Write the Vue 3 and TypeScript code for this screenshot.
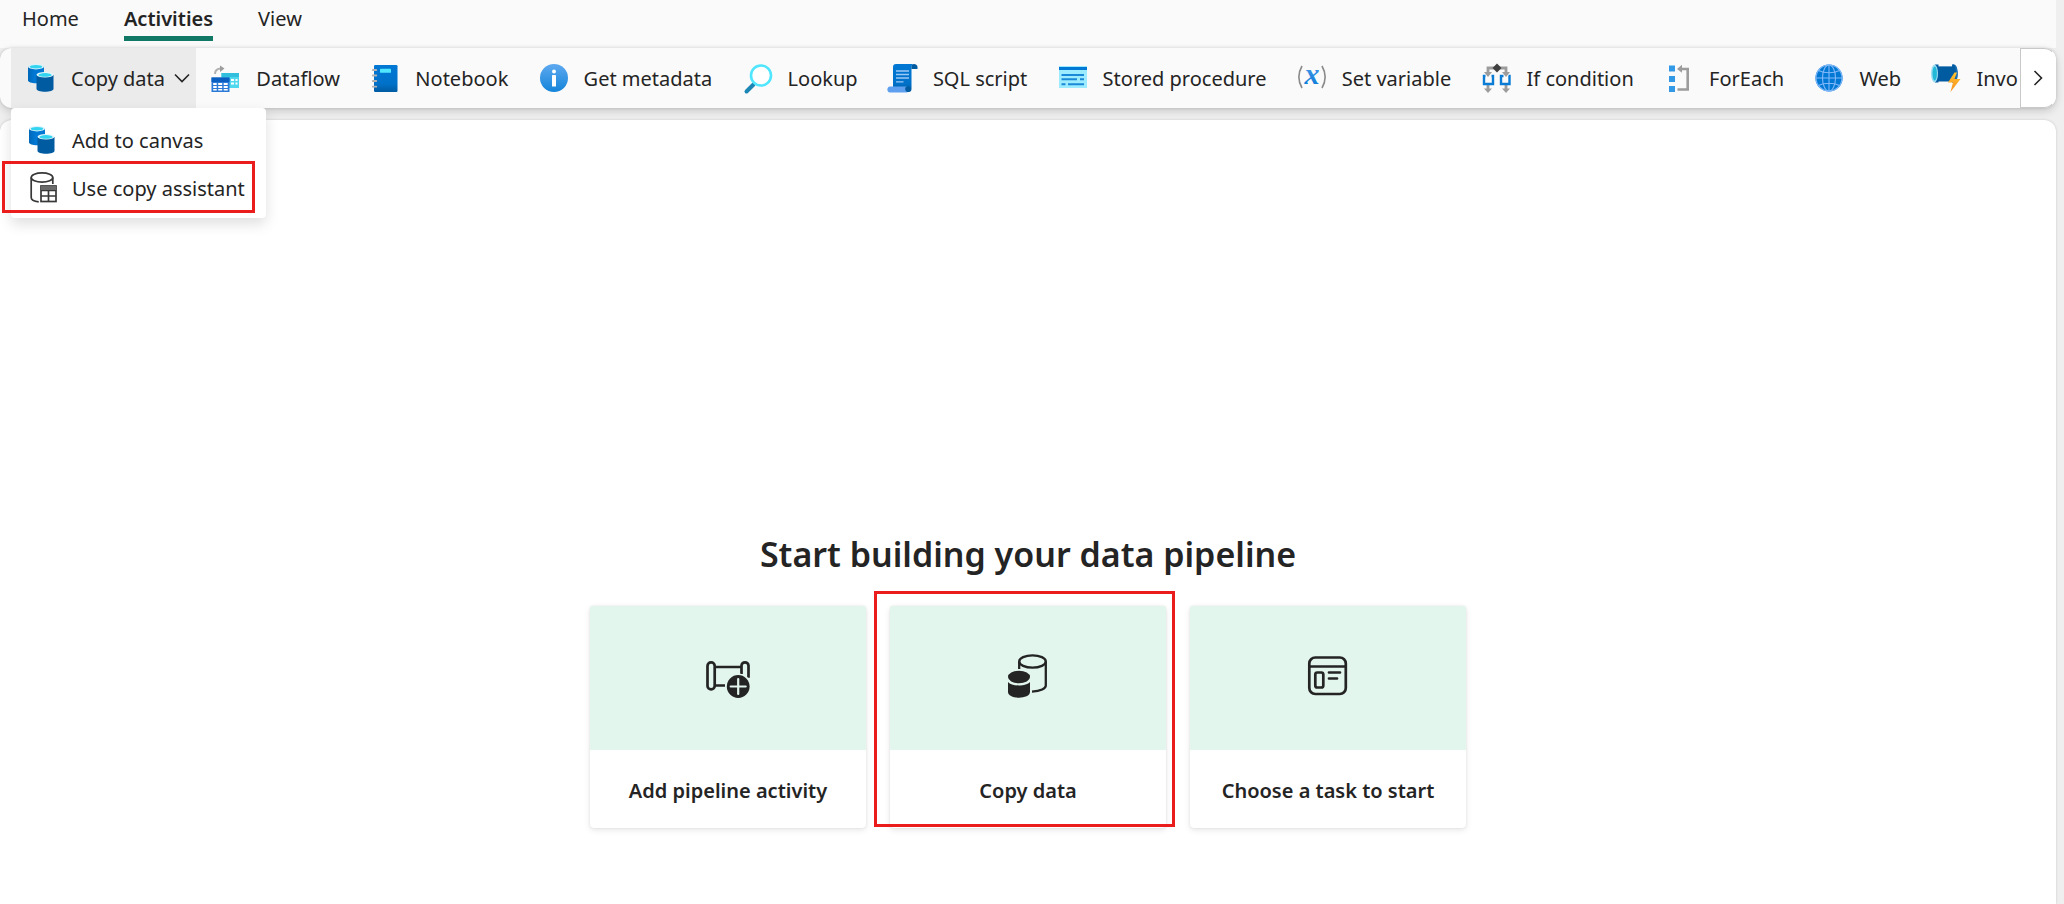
<script setup lang="ts">
import { ref } from 'vue'

interface Activity {
  id: string
  label: string
}

const tabs: string[] = ['Home', 'Activities', 'View']
const activeTab = ref('Activities')

const activities: Activity[] = [
  { id: 'dataflow', label: 'Dataflow' },
  { id: 'notebook', label: 'Notebook' },
  { id: 'metadata', label: 'Get metadata' },
  { id: 'lookup', label: 'Lookup' },
  { id: 'sql', label: 'SQL script' },
  { id: 'procedure', label: 'Stored procedure' },
  { id: 'variable', label: 'Set variable' },
  { id: 'condition', label: 'If condition' },
  { id: 'foreach', label: 'ForEach' },
  { id: 'web', label: 'Web' },
  { id: 'invoke', label: 'Invo' },
]

const cards: Activity[] = [
  { id: 'pipeline', label: 'Add pipeline activity' },
  { id: 'copy', label: 'Copy data' },
  { id: 'task', label: 'Choose a task to start' },
]
</script>

<template>
  <div class="page">
    <svg class="defs" aria-hidden="true">
      <defs>
        <linearGradient id="cylBack" x1="0" x2="1"><stop offset="0" stop-color="#0067b8" /><stop offset=".4" stop-color="#0078d4" /><stop offset="1" stop-color="#0078d4" /></linearGradient>
        <linearGradient id="blueDown" x1="0" y1="0" x2="0" y2="1"><stop offset="0" stop-color="#0078d4" /><stop offset=".7" stop-color="#0071c9" /><stop offset="1" stop-color="#005ba1" /></linearGradient>
        <linearGradient id="infoDown" x1="0" y1="0" x2="0" y2="1"><stop offset="0" stop-color="#5ea9f0" /><stop offset="1" stop-color="#1484d9" /></linearGradient>
        <linearGradient id="xDown" x1="0" y1="0" x2="0" y2="1"><stop offset="0" stop-color="#5ea0ef" /><stop offset="1" stop-color="#0078d4" /></linearGradient>
        <linearGradient id="bolt" x1="0" y1="0" x2="0" y2="1"><stop offset="0" stop-color="#ffc42e" /><stop offset="1" stop-color="#f78d1e" /></linearGradient>
        <symbol id="cylinders" viewBox="0 0 28 28">
          <path d="M1 2.500v14c0 1.600 3.600 2.800 8 2.800s8-1.200 8-2.800v-14z" fill="url(#cylBack)" />
          <ellipse cx="9" cy="2.700" rx="8" ry="2.700" fill="#d8f2fb" />
          <ellipse cx="9" cy="2.800" rx="6.200" ry="1.700" fill="#32d4f0" />
          <path d="M9.500 11v14c0 1.600 3.800 2.800 8.500 2.800s8.500-1.200 8.500-2.800V11z" fill="#005ba1" />
          <ellipse cx="18" cy="10.800" rx="8.500" ry="2.800" fill="#e4f6fc" />
          <ellipse cx="18" cy="10.900" rx="6.600" ry="1.800" fill="#32d4f0" />
        </symbol>
      </defs>
    </svg>

    <nav class="tabs" aria-label="Ribbon tabs">
      <button
        v-for="tab in tabs"
        :key="tab"
        type="button"
        class="tab"
        :class="{ active: tab === activeTab }"
        @click="activeTab = tab"
      >{{ tab }}</button>
    </nav>

    <div class="ribbon" role="toolbar" aria-label="Activities">
      <div class="items">
        <button type="button" class="item open" aria-haspopup="menu" aria-expanded="true">
          <svg class="icon"><use href="#cylinders" width="28" height="28" /></svg>
          <span class="label">Copy data</span>
          <svg class="caret" viewBox="0 0 16 10"><path d="M1 1.500l7 7 7-7" /></svg>
        </button>

        <button v-for="a in activities" :key="a.id" type="button" class="item">
          <svg class="icon" viewBox="0 0 28 28" aria-hidden="true">
            <g v-if="a.id === 'dataflow'">
              <path d="M3 10C3 6 5 4.500 9 4.500" fill="none" stroke="#b0b0b0" stroke-width="2" />
              <path d="M8 1.500l4.500 3-4.500 3.500z" fill="#9c9c9c" />
              <path d="M9.500 9h17.500v15H9.500z" fill="#50d8ee" />
              <path d="M9.500 9h17.500v4H9.500z" fill="#32bedd" />
              <path d="M19 15h3v2h-3zM23.500 15h2v2h-2zM19 18.500h3v2h-3zM23.500 18.500h2v2h-2z" fill="#fff" />
              <path d="M-.5 13.500h18V28h-18z" fill="#2a7ad6" />
              <path d="M-.5 13.500h18v4.500h-18z" fill="#0a5fc0" />
              <path d="M1.200 19h3.500v2H1.200zM6.200 19h4v2h-4zM11.700 19h4v2h-4zM1.200 22h3.500v2H1.200zM6.200 22h4v2h-4zM11.700 22h4v2h-4zM1.200 25h3.500v1.600H1.200zM6.200 25h4v1.600h-4zM11.700 25h4v1.600h-4z" fill="#fff" />
            </g>
            <g v-else-if="a.id === 'notebook'">
              <rect x="3" y="1" width="23.500" height="27" rx="1.200" fill="url(#blueDown)" />
              <rect x="9" y="4.800" width="11" height="4" rx=".6" fill="#50e6ff" />
              <path d="M1.800 6h3.500M1.800 11.500h3.500M1.800 17h3.500M1.800 22.700h3.500" stroke="#b3b3b3" stroke-width="1.800" stroke-linecap="round" />
            </g>
            <g v-else-if="a.id === 'metadata'">
              <circle cx="14" cy="14" r="14" fill="url(#infoDown)" />
              <circle cx="14" cy="7.500" r="2" fill="#fff" />
              <rect x="12" y="11" width="4" height="11.500" rx=".6" fill="#fff" />
            </g>
            <g v-else-if="a.id === 'lookup'">
              <path d="M9.500 20.500l-7 7" stroke="#1c86b4" stroke-width="4" stroke-linecap="round" />
              <circle cx="17" cy="11.500" r="10" fill="#fff" stroke="#50e6ff" stroke-width="2.600" />
            </g>
            <g v-else-if="a.id === 'sql'">
              <path d="M4 24V3c0-1.800 1-3 3-3h18c-1.500 0-2.500 1.200-2.500 3v22c0 2-1 3-3 3H4z" fill="url(#blueDown)" />
              <path d="M22.500 5V2.500C22.500 1 23.500 0 25 0s3.500 1 3.500 3v2z" fill="#005ba1" />
              <path d="M1 22.500h17c-1.200 1.200-1.200 4 .5 6H1c-3.500 0-3.500-6 0-6z" fill="#5ea0ef" />
              <circle cx="19" cy="25" r="2.800" fill="#005ba1" />
              <path d="M7 7h13M7 10.500h13M7 14h13M7 17.800h7.500" stroke="#9cc8f5" stroke-width="1.300" />
            </g>
            <g v-else-if="a.id === 'procedure'">
              <rect x="0" y="2" width="28" height="22" fill="#9cebff" />
              <rect x="0" y="3" width="28" height="3" fill="#0078d4" />
              <path d="M2.500 11h22.500M2.500 15.200h15.500M21 15.200h4M2.500 20.200h4M9 20.200h16" stroke="#1a8ad8" stroke-width="2" />
            </g>
            <g v-else-if="a.id === 'variable'">
              <path d="M4 2c-4 7-4 15 0 22M24 2c4 7 4 15 0 22" fill="none" stroke="#8a8a8a" stroke-width="1.600" />
              <text x="14" y="20" text-anchor="middle" class="glyph">x</text>
            </g>
            <g v-else-if="a.id === 'condition'">
              <path d="M5 9V4h18v5M5 21v4M23 21v4" fill="none" stroke="#9c9c9c" stroke-width="2.800" />
              <path d="M1 8h8l-4 5zM19 8h8l-4 5zM1 24.500h8l-4 4.500zM19 24.500h8l-4 4.500z" fill="#9c9c9c" />
              <path d="M14-.5l4.500 4.500L14 8.500 9.500 4z" fill="#404040" />
              <path d="M2.500 12H1v8h9v-8H8.500M20.500 12H18v8h8.500v-8H25.500" fill="none" stroke="#0a7cd6" stroke-width="2.400" />
            </g>
            <g v-else-if="a.id === 'foreach'">
              <path d="M4 1.500h6v6H4zM4 12h6v6H4zM4 22h6v6H4z" fill="#3299e6" />
              <path d="M16 5h6.700v20.500H12.500" fill="none" stroke="#9c9c9c" stroke-width="2.600" />
              <path d="M17 .8v8L12 5z" fill="#9c9c9c" />
            </g>
            <g v-else-if="a.id === 'web'">
              <circle cx="14" cy="14" r="13.600" fill="#0078d4" />
              <g fill="none" stroke="#83b9f9" stroke-width="1.100">
                <circle cx="14" cy="14" r="13" />
                <ellipse cx="14" cy="14" rx="6.500" ry="13" />
                <path d="M14 1v26M1 14h26M3.500 6.500c6 3 15 3 21 0M3.500 21.500c6-3 15-3 21 0" />
              </g>
            </g>
            <g v-else>
              <path d="M2 2.500h22c2 4 2 11 0 15H2z" fill="#005ba1" />
              <path d="M22 .5c5 0 5 18 0 18h-2V.5z" fill="#1a6fb5" />
              <path d="M3 .5h3.500v2.300h14V.5H22c2.500 2 2.500 16 0 18h-1.500v-2H6.500v2H3z" fill="#005ba1" />
              <ellipse cx="2.500" cy="9.500" rx="3.500" ry="9" fill="#9adcf2" />
              <ellipse cx="2.700" cy="9.500" rx="2.200" ry="7" fill="#22b8d8" />
              <path d="M22.500 8.500L16 18.500h5l-2.500 9.500L28.500 15h-6l2.500-6.500z" fill="url(#bolt)" />
            </g>
          </svg>
          <span class="label">{{ a.label }}</span>
        </button>
      </div>
      <button type="button" class="scroll" aria-label="Scroll right">
        <svg viewBox="0 0 10 16"><path d="M1.500 1l7 7-7 7" /></svg>
      </button>

      <div class="menu" role="menu">
        <button type="button" class="menu-item" role="menuitem">
          <svg class="icon"><use href="#cylinders" width="28" height="28" /></svg>
          <span class="label">Add to canvas</span>
        </button>
        <button type="button" class="menu-item marked" role="menuitem">
          <svg class="icon" viewBox="0 0 28 28">
            <g fill="none" stroke="#383838" stroke-width="1.700">
              <ellipse cx="14" cy="3.500" rx="10.800" ry="4.700" />
              <path d="M3.200 3.500v20c0 2 3 3.800 7.500 4.300M24.800 3.500v6.500" />
              <rect x="13" y="12" width="15" height="15.500" fill="#fff" />
              <path d="M13 16.500h15M13 22h15M20.500 16v11" />
            </g>
            <path d="M13 12h15v4H13z" fill="#6a6a6a" />
          </svg>
          <span class="label">Use copy assistant</span>
        </button>
      </div>
    </div>

    <main class="canvas">
      <h1>Start building your data pipeline</h1>
      <div class="cards">
        <button v-for="c in cards" :key="c.id" type="button" class="card" :class="{ marked: c.id === 'copy' }">
          <span class="art">
            <svg v-if="c.id === 'pipeline'" viewBox="0 0 48 48">
              <g fill="none" stroke="#242424" stroke-width="2.700">
                <rect x="3.500" y="8.400" width="7.200" height="27" rx="3.500" />
                <path d="M10.700 13H37M10.700 31.500H21" />
              </g>
              <path d="M37.500 20v-8.200a3.500 3.500 0 0 1 7 0v12" fill="none" stroke="#242424" stroke-width="2.700" />
              <circle cx="34.200" cy="32.500" r="13" fill="#e3f6ed" />
              <circle cx="34.200" cy="32.500" r="11.400" fill="#242424" />
              <path d="M34.200 25v15M26.700 32.500h15" stroke="#e3f6ed" stroke-width="2.200" stroke-linecap="round" />
            </svg>
            <svg v-else-if="c.id === 'copy'" viewBox="0 0 48 48">
              <g fill="none" stroke="#242424" stroke-width="2.300">
                <ellipse cx="28.500" cy="7.500" rx="13.300" ry="6.200" />
                <path d="M15.200 7.500v7.500M41.800 7.500v24c0 3-5 5.800-13.800 6.200" />
              </g>
              <ellipse cx="15" cy="23" rx="11" ry="6.200" fill="#242424" />
              <path d="M4 28c3.500 4.600 18.500 4.600 22 0v10c0 7.500-22 7.500-22 0z" fill="#242424" />
            </svg>
            <svg v-else viewBox="0 0 48 48">
              <g fill="none" stroke="#242424" stroke-width="2.700">
                <rect x="5.300" y="3.500" width="36.500" height="36.500" rx="6" />
                <path d="M5.300 12.500h36.500" />
                <rect x="11.300" y="18.500" width="8" height="15" rx="2" />
                <path d="M25 18.500h11M25 24.500h8" stroke-linecap="round" />
              </g>
            </svg>
          </span>
          <span class="caption">{{ c.label }}</span>
        </button>
      </div>
    </main>
  </div>
</template>

<style>
body {
  margin: 0;
  background: #efefef;
}
</style>

<style scoped>
.page {
  display: flex;
  flex-direction: column;
  box-sizing: border-box;
  min-height: 100vh;
  padding-right: 8px;
  background: #efefef;
  color: #242424;
  font-family: "Noto Sans", "Open Sans", sans-serif;
  font-size: 20px;
  line-height: 28px;
  overflow: hidden;
}

button {
  margin: 0;
  padding: 0;
  border: 0;
  background: none;
  color: inherit;
  font: inherit;
  text-align: left;
  white-space: nowrap;
}

.defs {
  position: absolute;
  width: 0;
  height: 0;
}

.tabs {
  display: flex;
  gap: 45px;
  height: 48px;
  padding-left: 22px;
  background: #fafafa;
}

.tab {
  height: 41px;
  padding-top: 1px;
  box-sizing: border-box;
  border-bottom: 5px solid transparent;
}

.tab.active {
  border-color: #117865;
  font-weight: 600;
}

.ribbon {
  position: relative;
  z-index: 1;
  display: flex;
  height: 60px;
  border-radius: 12px;
  background: #fafafa;
  box-shadow: 0 0 3px rgba(0, 0, 0, 0.14), 0 3px 8px rgba(0, 0, 0, 0.16);
}

.items {
  display: flex;
  flex: 1;
  justify-content: space-between;
  min-width: 0;
  padding: 0 2px 0 11px;
  overflow: hidden;
}

.item {
  display: flex;
  flex: none;
  align-items: center;
  gap: 16px;
  padding: 0 15px;
}

.item:last-child {
  padding-right: 0;
}

.item.open {
  padding: 0 6px 0 16px;
  background: #ebebeb;
}

.item.open .caret {
  margin-left: -7px;
}

.icon {
  flex: none;
  width: 28px;
  height: 28px;
  overflow: visible;
}

.label {
  padding-top: 2px;
}

.glyph {
  fill: url(#xDown);
  font: italic 600 30px "Liberation Serif", serif;
}

.caret {
  width: 16px;
  height: 10px;
}

.caret path,
.scroll path {
  fill: none;
  stroke: #242424;
  stroke-width: 1.6;
}

.scroll {
  display: flex;
  flex: none;
  align-items: center;
  justify-content: center;
  width: 36px;
  box-sizing: border-box;
  border: 1px solid #c8c8c8;
  border-right-color: #fff;
  border-radius: 0 12px 12px 0;
  background: #fff;
}

.scroll svg {
  width: 10px;
  height: 16px;
}

.menu {
  position: absolute;
  top: 60px;
  left: 11px;
  box-sizing: border-box;
  width: 255px;
  padding: 8px 0 6px;
  border-radius: 4px;
  background: #fff;
  box-shadow: 0 6px 14px rgba(0, 0, 0, 0.13);
}

.menu-item {
  position: relative;
  display: flex;
  align-items: center;
  gap: 16px;
  width: 100%;
  height: 48px;
  padding-left: 17px;
}

.menu-item.marked::after {
  content: "";
  position: absolute;
  inset: -3px 11px -1px -9px;
  border: 3px solid #eb1c1c;
}

.canvas {
  display: flex;
  flex: 1;
  flex-direction: column;
  align-items: center;
  margin-top: 12px;
  padding: 408px 24px 24px;
  border-radius: 12px 12px 0 0;
  background: #fff;
  box-shadow: 0 0 3px rgba(0, 0, 0, 0.16);
}

h1 {
  margin: 0 0 26px;
  font-size: 34px;
  font-weight: 600;
  line-height: 52px;
}

.cards {
  display: flex;
  gap: 24px;
}

.card {
  position: relative;
  display: flex;
  flex-direction: column;
  width: 276px;
  border-radius: 4px;
  background: #fff;
  box-shadow: 0 0 2px rgba(0, 0, 0, 0.1), 0 2px 6px rgba(0, 0, 0, 0.1);
}

.card.marked::after {
  content: "";
  position: absolute;
  inset: -15px -9px 1px -16px;
  border: 3px solid #eb1c1c;
}

.art {
  display: flex;
  align-items: center;
  justify-content: center;
  width: 100%;
  height: 144px;
  border-radius: 2px 2px 0 0;
  background: #e3f6ed;
}

.art svg {
  width: 48px;
  height: 48px;
}

.caption {
  width: 100%;
  padding: 27px 0 23px;
  font-weight: 600;
  text-align: center;
}
</style>
